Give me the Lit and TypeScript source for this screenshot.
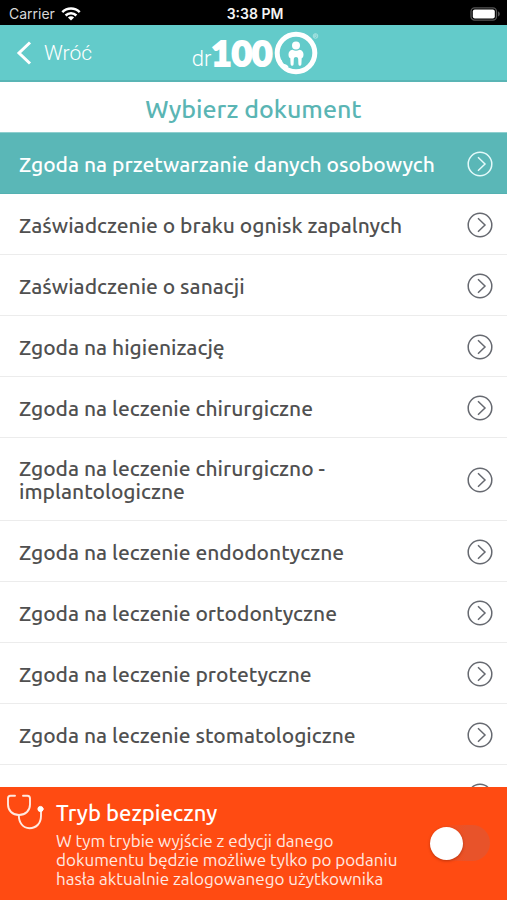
import { LitElement, html, css } from "lit";
import { customElement, property, state } from "lit/decorators.js";
import { classMap } from "lit/directives/class-map.js";

const DOCUMENTS = [
  "Zgoda na przetwarzanie danych osobowych",
  "Zaświadczenie o braku ognisk zapalnych",
  "Zaświadczenie o sanacji",
  "Zgoda na higienizację",
  "Zgoda na leczenie chirurgiczne",
  "Zgoda na leczenie chirurgiczno - implantologiczne",
  "Zgoda na leczenie endodontyczne",
  "Zgoda na leczenie ortodontyczne",
  "Zgoda na leczenie protetyczne",
  "Zgoda na leczenie stomatologiczne",
  "Zgoda na zabieg wybielania zębów",
];

@customElement("status-bar")
export class StatusBar extends LitElement {
  static styles = css`
    :host {
      display: grid;
      grid-template-columns: 1fr auto 1fr;
      align-items: center;
      height: 25px;
      padding: 2px 6px 0 9px;
      box-sizing: border-box;
      background: #000;
      color: #f4f4f4;
      font: 400 14px/20px Inter, "Liberation Sans", sans-serif;
    }
    .carrier {
      display: flex;
      align-items: center;
      gap: 6px;
      color: #d8d8d8;
    }
    .time {
      font-weight: 600;
    }
    .battery {
      justify-self: end;
    }
    svg {
      display: block;
    }
  `;

  render() {
    return html`
      <span class="carrier">
        Carrier
        <svg width="20" height="14" viewBox="0 0 20 14" fill="none" stroke="#fff" stroke-width="2.5" aria-hidden="true">
          <path d="M1.3 5.2a12.3 12.3 0 0 1 17.4 0M4.6 8.5a7.6 7.6 0 0 1 10.8 0" />
          <path d="M10 13.6 6.9 10.6a4.4 4.4 0 0 1 6.2 0z" fill="#fff" stroke="none" />
        </svg>
      </span>
      <span class="time">3:38 PM</span>
      <svg class="battery" width="31" height="14" viewBox="0 0 31 14" aria-hidden="true">
        <rect x="1" y=".9" width="25.5" height="12.2" rx="3.6" fill="none" stroke="#555" stroke-width="1.3" />
        <rect x="2.8" y="2.6" width="22" height="8.8" rx="2" fill="#fff" />
        <path d="M28 4.6c2.4.6 2.4 4.2 0 4.8z" fill="#555" />
      </svg>
    `;
  }
}

@customElement("brand-logo")
export class BrandLogo extends LitElement {
  static styles = css`
    :host {
      display: flex;
      align-items: center;
      padding-left: 4px;
      color: #fff;
    }
    .name {
      display: flex;
      align-items: baseline;
      line-height: 36px;
    }
    .dr {
      font: 300 22px Roboto, sans-serif;
    }
    .number {
      font: 900 35px/36px Lato, sans-serif;
      -webkit-text-stroke: 2px #fff;
    }
    svg {
      display: block;
    }
  `;

  render() {
    return html`
      <span class="name"><span class="dr">dr</span><span class="number">100</span></span>
      <svg width="47" height="44" viewBox="0 0 47 44" aria-hidden="true">
        <circle cx="24" cy="22" r="18.8" fill="none" stroke="#fff" stroke-width="5" />
        <path d="M7 27c3 2 4.300 4 2.600 6.500 3-.8 5-.5 7 2.500l-5 3z" fill="#fff" />
        <circle cx="24" cy="14.500" r="4" fill="#fff" />
        <path
          d="M20.500 18.700q3.500 2 7 0c2.800.5 4 2.300 4 4.800 0 2.300-.8 3.500-1.800 3.700l-.3 6q-.2 1.500-1.500 1.500t-1.500-1.500l-.2-5c0-3-4.400-3-4.400 0l-.2 5q-.2 1.500-1.500 1.500t-1.500-1.500l-.3-6c-1-.2-1.800-1.400-1.800-3.700 0-2.500 1.200-4.300 4-4.800z"
          fill="#fff"
        />
        <g fill="none" stroke="#b9e8e6" stroke-width=".8">
          <circle cx="43.500" cy="5" r="2.300" />
          <path d="M42.800 6.500V3.700h.9q1 .7 0 1.400h-.9m.9 0 .8 1.400" />
        </g>
      </svg>
    `;
  }
}

@customElement("document-row")
export class DocumentRow extends LitElement {
  @property() label = "";
  @property({ type: Boolean }) selected = false;

  static styles = css`
    :host {
      display: block;
    }
    .row {
      display: flex;
      align-items: center;
      justify-content: space-between;
      gap: 16px;
      width: 100%;
      padding: 19px 14px 17px 19px;
      border: 0;
      border-bottom: 1px solid #ececec;
      background: #fff;
      color: #505050;
      font: 500 21px/23px Ubuntu, "Noto Sans", sans-serif;
      text-align: left;
      cursor: pointer;
    }
    .selected {
      border-bottom-color: #54b1b1;
      background: #5ab7b7;
      color: #fff;
    }
    .label {
      max-width: 420px;
    }
    svg {
      flex: none;
      margin: -1px 0;
      color: #666970;
    }
    .selected svg {
      color: #e4fafa;
    }
  `;

  render() {
    return html`
      <button class=${classMap({ row: true, selected: this.selected })} aria-pressed=${this.selected}>
        <span class="label">${this.label}</span>
        <svg width="26" height="26" viewBox="0 0 26 26" fill="none" stroke="currentColor" stroke-width="1.500" aria-hidden="true">
          <circle cx="13" cy="13" r="11.800" />
          <path d="M11 6.200 18 13l-7 6.800" />
        </svg>
      </button>
    `;
  }
}

@customElement("safe-mode-bar")
export class SafeModeBar extends LitElement {
  static styles = css`
    :host {
      display: flex;
      align-items: flex-start;
      padding: 7px 17px 12px 6px;
      background: #ff4b12;
      color: #fff;
      font: 400 17px/19px Ubuntu, "Noto Sans", sans-serif;
    }
    .icon {
      flex: none;
      margin-right: 12px;
    }
    .text {
      flex: 1;
      display: flex;
      flex-direction: column;
    }
    .title {
      font-size: 22px;
      line-height: 37px;
      font-weight: 500;
    }
    .hint {
      max-width: 360px;
      margin: 0;
      color: #ffeae2;
    }
    .switch {
      flex: none;
      align-self: center;
      display: flex;
      align-items: center;
      width: 60px;
      height: 36px;
      margin: 4px 0 0;
      border-radius: 18px;
      appearance: none;
      background: linear-gradient(90deg, #ff4b12 20%, #e8532a 60%);
      cursor: pointer;
    }
    .switch::before {
      content: "";
      width: 33px;
      height: 33px;
      border-radius: 50%;
      background: #fff;
      box-shadow: 0 1px 3px rgb(90 20 0 / 40%);
    }
    .switch:checked {
      justify-content: flex-end;
    }
  `;

  render() {
    return html`
      <svg class="icon" width="38" height="38" viewBox="0 0 38 38" fill="none" stroke="#ffe9e0" stroke-width="1.900" stroke-linecap="round" aria-hidden="true">
        <path d="M9 1.800H4.500Q2 1.800 2 4.500V10.500c0 6 4.500 10.500 11 10.500s11-4.500 11-10.500V4.500q0-2.700-2.500-2.700H17" />
        <path d="M12.800 21c0 7.800 4.200 13.200 10.700 13.200 7 0 11.500-5 11.500-12.500v-4" />
        <circle cx="34.500" cy="15" r="2.600" fill="#fff" stroke="#fff" stroke-width="1" />
      </svg>
      <div class="text">
        <label class="title" for="safe">Tryb bezpieczny</label>
        <p class="hint" id="hint">
          W tym trybie wyjście z edycji danego dokumentu będzie możliwe tylko po podaniu hasła aktualnie zalogowanego
          użytkownika
        </p>
      </div>
      <input class="switch" id="safe" type="checkbox" role="switch" aria-describedby="hint" />
    `;
  }
}

@customElement("app-root")
export class AppRoot extends LitElement {
  @state() private selected = 0;

  static styles = css`
    :host {
      display: flex;
      flex-direction: column;
      height: 100vh;
      overflow: hidden;
      background: #fff;
    }
    .nav {
      display: grid;
      grid-template-columns: 1fr auto 1fr;
      align-items: center;
      height: 57px;
      padding: 0 16px;
      box-sizing: border-box;
      border-bottom: 2px solid #59b5b5;
      background: #63cbca;
    }
    .back {
      display: flex;
      align-items: center;
      justify-self: start;
      gap: 12px;
      padding: 0;
      border: 0;
      background: none;
      color: #fff;
      font: 300 21px/24px Roboto, sans-serif;
      cursor: pointer;
    }
    .title {
      margin: 0;
      padding: 12px 16px 8px;
      border-bottom: 1px solid #8fcfcf;
      color: #5ab5b4;
      font: 500 25px/30px Ubuntu, "Noto Sans", sans-serif;
      text-align: center;
    }
    .list {
      flex: 1;
      min-height: 0;
      margin: 0;
      padding: 0;
      list-style: none;
      overflow-y: auto;
      scrollbar-width: none;
    }
  `;

  render() {
    return html`
      <status-bar></status-bar>
      <header class="nav">
        <button class="back">
          <svg width="16" height="24" viewBox="0 0 16 24" fill="none" stroke="#fff" stroke-width="3" aria-hidden="true">
            <path d="M14 1.500 3 12l11 10.500" />
          </svg>
          Wróć
        </button>
        <brand-logo></brand-logo>
      </header>
      <h1 class="title">Wybierz dokument</h1>
      <ul class="list">
        ${DOCUMENTS.map(
          (label, i) => html`
            <li>
              <document-row .label=${label} .selected=${i === this.selected} @click=${() => (this.selected = i)}></document-row>
            </li>
          `
        )}
      </ul>
      <safe-mode-bar></safe-mode-bar>
    `;
  }
}
